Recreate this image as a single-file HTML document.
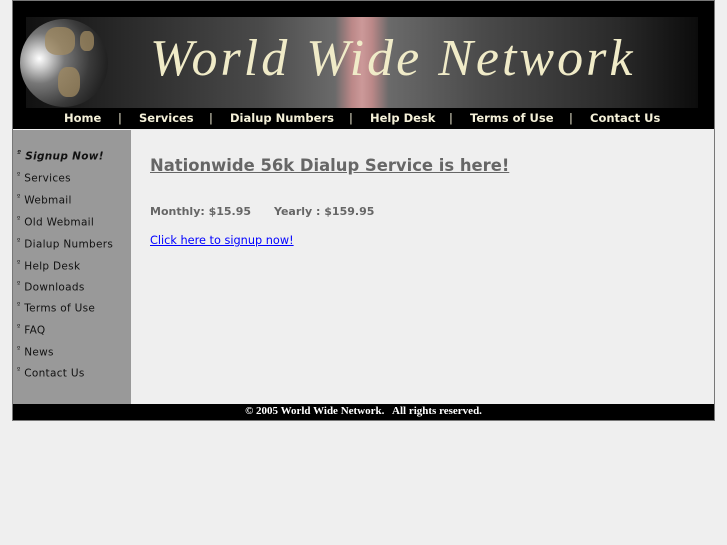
<!DOCTYPE html>
<html><head><meta charset="utf-8"><style>
body{margin:0;background:#efefef;width:727px;height:545px;font-family:"DejaVu Sans",sans-serif;position:relative;overflow:hidden}
.box{position:absolute;left:12px;top:0;width:701px;height:419px;border:1px solid #777;background:#efefef}
.hdr{position:absolute;left:0;top:0;width:701px;height:128px;background:#000}
.ban{position:absolute;left:13px;top:16px;width:672px;height:91px;background:linear-gradient(90deg,#111 0%,#2a2a2a 15%,#4a4a4a 35%,#6a6a6a 46%,#b88 48.5%,#c99 50%,#b88 51.5%,#6a6a6a 54%,#4a4a4a 68%,#2a2a2a 88%,#0c0c0c 100%)}
.title{position:absolute;left:124px;top:12px;font-family:"Liberation Serif",serif;font-style:italic;font-size:52px;color:#f0ebc8;letter-spacing:3px;white-space:nowrap}
.globe{position:absolute;left:7px;top:18px;width:88px;height:88px;border-radius:50%;background:radial-gradient(circle at 22% 45%,#fff 0%,#ccc 12%,#777 30%,#3a3a3a 60%,#222 80%,#111 100%);overflow:hidden}
.globe i{position:absolute;background:#a08a60;opacity:.75;border-radius:40%}
.nav{position:absolute;top:110px;left:0;width:701px;color:#f4f0d8;font-size:11.5px;font-weight:bold;white-space:nowrap}
.nav span{position:absolute}
.side{position:absolute;left:0;top:129px;width:118px;height:274px;background:#999}
.side div{position:absolute;left:4px;font-size:10.5px;color:#111;letter-spacing:.3px}
.side sup{font-size:7px}
.foot{position:absolute;left:0;top:403px;width:701px;height:16px;background:#000;color:#fff;font-family:"Liberation Serif",serif;font-weight:bold;font-size:11px;text-align:center;line-height:15px}
.main{position:absolute;left:137px;top:0}
h1{position:absolute;top:155px;margin:0;font-size:16.4px;color:#666;text-decoration:underline;white-space:nowrap}
.price{position:absolute;top:204px;font-size:11px;font-weight:bold;color:#666;white-space:nowrap}
a{position:absolute;top:233px;font-size:11.3px;color:#00f;white-space:nowrap;text-decoration:underline}
</style></head><body>
<div class="box">
<div class="hdr">
<div class="ban"><div class="title">World Wide Network</div></div>
<div class="globe"><i style="left:25px;top:8px;width:30px;height:28px"></i><i style="left:38px;top:48px;width:22px;height:30px"></i><i style="left:60px;top:12px;width:14px;height:20px"></i></div>
<div class="nav">
<span style="left:51px">Home</span><span style="left:105px;font-weight:normal">|</span>
<span style="left:126px">Services</span><span style="left:196px;font-weight:normal">|</span>
<span style="left:217px">Dialup Numbers</span><span style="left:336px;font-weight:normal">|</span>
<span style="left:357px">Help Desk</span><span style="left:436px;font-weight:normal">|</span>
<span style="left:457px">Terms of Use</span><span style="left:556px;font-weight:normal">|</span>
<span style="left:577px">Contact Us</span>
</div></div>
<div class="side">
<div style="top:19px;font-weight:bold;font-style:italic"><sup>º</sup> Signup Now!</div>
<div style="top:41px"><sup>º</sup> Services</div>
<div style="top:63px"><sup>º</sup> Webmail</div>
<div style="top:85px"><sup>º</sup> Old Webmail</div>
<div style="top:107px"><sup>º</sup> Dialup Numbers</div>
<div style="top:129px"><sup>º</sup> Help Desk</div>
<div style="top:150px"><sup>º</sup> Downloads</div>
<div style="top:171px"><sup>º</sup> Terms of Use</div>
<div style="top:193px"><sup>º</sup> FAQ</div>
<div style="top:215px"><sup>º</sup> News</div>
<div style="top:236px"><sup>º</sup> Contact Us</div>
</div>
<div class="main">
<h1>Nationwide 56k Dialup Service is here!</h1>
<div class="price">Monthly: $15.95 &nbsp;&nbsp;&nbsp;&nbsp; Yearly : $159.95</div>
<a>Click here to signup now!</a>
</div>
<div class="foot">© 2005 World Wide Network. &nbsp; All rights reserved.</div>
</div>
</body></html>
